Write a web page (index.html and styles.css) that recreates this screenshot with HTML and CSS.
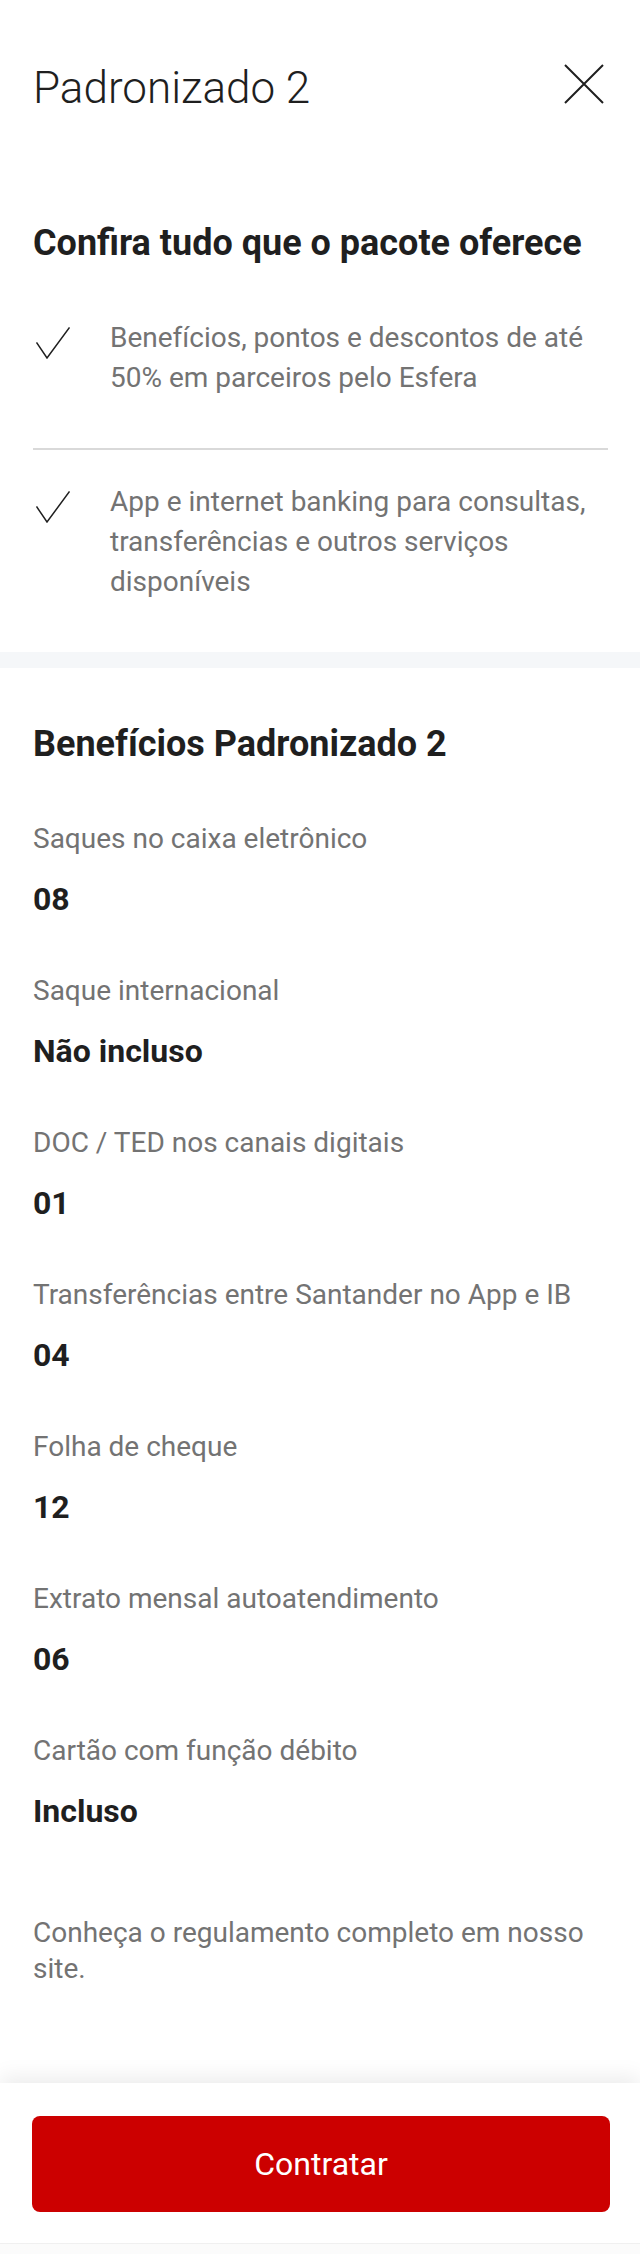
FILE: index.html
```html
<!DOCTYPE html>
<html lang="pt-BR">
<head>
    <meta charset="UTF-8">
    <meta name="viewport" content="width=device-width, initial-scale=1.0">
    <title>Padronizado 2</title>
    <link rel="stylesheet" href="styles.css">
</head>
<body>
    <main class="sheet">
        <header class="sheet-header">
            <h1 class="sheet-title">Padronizado 2</h1>
            <button class="close" aria-label="Fechar">
                <svg width="40" height="40" viewBox="0 0 40 40">
                    <path d="M1 1 L39 39 M39 1 L1 39" stroke="#1f1f1f" stroke-width="2" fill="none"/>
                </svg>
            </button>
        </header>

        <section class="package">
            <h2 class="section-title">Confira tudo que o pacote oferece</h2>
            <ul class="features">
                <li class="feature">
                    <svg class="check" width="34" height="32" viewBox="0 0 34 32">
                        <polyline points="0.5,15.5 11,31 33.5,0.5" stroke="#1f1f1f" stroke-width="1.5" fill="none"/>
                    </svg>
                    <p>Benefícios, pontos e descontos de até 50% em parceiros pelo Esfera</p>
                </li>
                <li class="feature">
                    <svg class="check" width="34" height="32" viewBox="0 0 34 32">
                        <polyline points="0.5,15.5 11,31 33.5,0.5" stroke="#1f1f1f" stroke-width="1.5" fill="none"/>
                    </svg>
                    <p>App e internet banking para consultas, transferências e outros serviços disponíveis</p>
                </li>
            </ul>
        </section>

        <div class="band"></div>

        <section class="benefits">
            <h2 class="section-title">Benefícios Padronizado 2</h2>
            <dl class="benefit-list">
                <div class="benefit">
                    <dt>Saques no caixa eletrônico</dt>
                    <dd>08</dd>
                </div>
                <div class="benefit">
                    <dt>Saque internacional</dt>
                    <dd>Não incluso</dd>
                </div>
                <div class="benefit">
                    <dt>DOC / TED nos canais digitais</dt>
                    <dd>01</dd>
                </div>
                <div class="benefit">
                    <dt>Transferências entre Santander no App e IB</dt>
                    <dd>04</dd>
                </div>
                <div class="benefit">
                    <dt>Folha de cheque</dt>
                    <dd>12</dd>
                </div>
                <div class="benefit">
                    <dt>Extrato mensal autoatendimento</dt>
                    <dd>06</dd>
                </div>
                <div class="benefit">
                    <dt>Cartão com função débito</dt>
                    <dd>Incluso</dd>
                </div>
            </dl>
            <p class="note">Conheça o regulamento completo em nosso site.</p>
        </section>
    </main>

    <footer class="actions">
        <button class="btn-primary">Contratar</button>
        <div class="nav-edge"></div>
    </footer>
</body>
</html>
```

FILE: styles.css
```css
* {
    box-sizing: border-box;
}

body {
    font-family: 'Roboto', 'Liberation Sans', sans-serif;
    background: #fff;
    color: #1f1f1f;
    margin: 0;
    min-height: 100vh;
    display: flex;
    flex-direction: column;
}

.sheet {
    flex: 1;
}

.sheet-header {
    display: flex;
    justify-content: space-between;
    align-items: flex-start;
    padding: 63px 36px 0 33px;
}

.sheet-title {
    margin: 0;
    font-size: 44px;
    font-weight: 300;
    line-height: 50px;
    color: #1f1f1f;
}

.close {
    width: 40px;
    height: 40px;
    margin-top: 1px;
    padding: 0;
    border: none;
    background: none;
    display: flex;
}

.section-title {
    margin: 0 0 55px;
    font-size: 36px;
    font-weight: 700;
    line-height: 40px;
    color: #1f1f1f;
}

.package {
    padding: 110px 32px 50px 33px;
}

.features {
    list-style: none;
    margin: 0;
    padding: 0;
}

.feature {
    display: flex;
    align-items: flex-start;
    gap: 40px;
    padding: 0 0 50px 3px;
}

.feature + .feature {
    border-top: 2px solid #d9d9d9;
    padding: 32px 0 0 3px;
}

.check {
    flex-shrink: 0;
    margin-top: 9px;
}

.feature p {
    margin: 0;
    font-size: 28px;
    line-height: 40px;
    color: #737373;
}

.band {
    height: 16px;
    background: #f5f7f9;
}

.benefits {
    padding: 56px 32px 0 33px;
}

.benefit-list {
    margin: 0;
}

.benefit + .benefit {
    margin-top: 52px;
}

.benefit dt {
    font-size: 28px;
    line-height: 40px;
    color: #737373;
}

.benefit dd {
    margin: 20px 0 0;
    font-size: 32px;
    font-weight: 700;
    line-height: 40px;
    color: #1f1f1f;
}

.note {
    margin: 84px 0 0;
    font-size: 28px;
    line-height: 36px;
    color: #737373;
}

.actions {
    height: 171px;
    padding-top: 33px;
    background: #fff;
    box-shadow: 0 -6px 20px rgba(0, 0, 0, 0.08);
    display: flex;
    flex-direction: column;
}

.btn-primary {
    margin: 0 30px 0 32px;
    height: 96px;
    border: none;
    border-radius: 8px;
    background: #cc0000;
    color: #fff;
    font-family: 'Roboto', 'Liberation Sans', sans-serif;
    font-size: 32px;
    font-weight: 400;
}

.nav-edge {
    margin-top: auto;
    height: 11px;
    background: #fbfbfb;
    border-top: 1px solid #f0f0f0;
}
```
